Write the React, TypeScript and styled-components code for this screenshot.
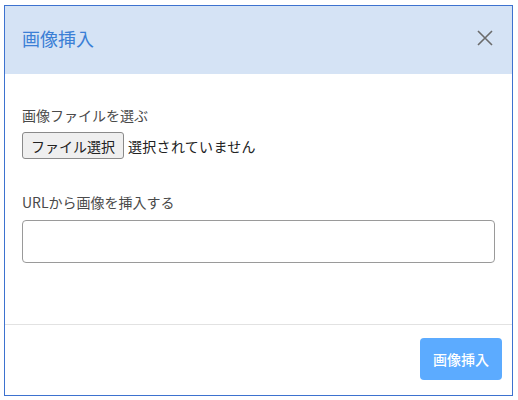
import styled, { createGlobalStyle } from "styled-components";

const GlobalStyle = createGlobalStyle`
  html, body {
    margin: 0;
    padding: 0;
    background: #ffffff;
  }
  body {
    font-family: "Noto Sans", "Noto Sans CJK JP", sans-serif;
  }
`;

const Page = styled.div`
  padding: 5px 5px 4px 4px;
  width: 518px;
  height: 400px;
  box-sizing: border-box;
`;

const Modal = styled.div`
  width: 509px;
  height: 391px;
  box-sizing: border-box;
  border: 1px solid #3d72cf;
  display: flex;
  flex-direction: column;
  background: #ffffff;
`;

const Header = styled.header`
  height: 68px;
  flex: none;
  display: flex;
  align-items: center;
  justify-content: space-between;
  padding: 0 19px 4px 17px;
  box-sizing: border-box;
  background: #d5e3f5;
`;

const Title = styled.h2`
  margin: 0;
  font-size: 18px;
  font-weight: 400;
  color: #3b7fd6;
  font-family: "Noto Sans CJK JP", sans-serif;
`;

const CloseButton = styled.button`
  border: none;
  background: none;
  padding: 0;
  width: 17px;
  height: 17px;
  display: flex;
  align-items: center;
  justify-content: center;
  cursor: pointer;
`;

const Body = styled.div`
  flex: 1;
  padding: 31px 17px 0 17px;
  display: flex;
  flex-direction: column;
  border-bottom: 1px solid #e2e2e2;
`;

const Label = styled.div`
  font-size: 14px;
  line-height: 21px;
  color: #4a4a4a;
  font-family: "Noto Sans CJK JP", sans-serif;
`;

const FileRow = styled.div`
  display: flex;
  align-items: center;
  gap: 4px;
  margin-top: 6px;
  margin-bottom: 33px;
`;

const FileButton = styled.button`
  height: 27px;
  box-sizing: border-box;
  padding: 0 8px;
  border: 1px solid #8a8a8a;
  border-radius: 3px;
  background: #efefef;
  font-size: 14px;
  color: #222;
  font-family: "Noto Sans CJK JP", sans-serif;
`;

const FileStatus = styled.span`
  font-size: 14px;
  letter-spacing: 0.3px;
  color: #222;
  font-family: "Noto Sans CJK JP", sans-serif;
`;

const UrlInput = styled.input`
  margin-top: 7px;
  height: 43px;
  width: 473px;
  box-sizing: border-box;
  border: 1px solid #9a9a9a;
  border-radius: 4px;
  padding: 0 10px;
  font-size: 14px;
`;

const Footer = styled.footer`
  height: 68px;
  flex: none;
  display: flex;
  align-items: center;
  justify-content: flex-end;
  padding: 0 10px 2px 0;
`;

const InsertButton = styled.button`
  height: 42px;
  padding: 0 13px;
  border: none;
  border-radius: 4px;
  background: #5cabff;
  color: #ffffff;
  font-size: 14px;
  font-weight: 500;
  font-family: "Noto Sans CJK JP", sans-serif;
`;

export default function App() {
  return (
    <Page>
      <GlobalStyle />
      <Modal>
        <Header>
          <Title>画像挿入</Title>
          <CloseButton aria-label="閉じる">
            <svg width="16" height="16" viewBox="0 0 16 16">
              <path d="M1 1 L15 15 M15 1 L1 15" stroke="#6b6b6b" strokeWidth="1.6" fill="none" />
            </svg>
          </CloseButton>
        </Header>
        <Body>
          <Label>画像ファイルを選ぶ</Label>
          <FileRow>
            <FileButton>ファイル選択</FileButton>
            <FileStatus>選択されていません</FileStatus>
          </FileRow>
          <Label>URLから画像を挿入する</Label>
          <UrlInput type="text" />
        </Body>
        <Footer>
          <InsertButton>画像挿入</InsertButton>
        </Footer>
      </Modal>
    </Page>
  );
}
